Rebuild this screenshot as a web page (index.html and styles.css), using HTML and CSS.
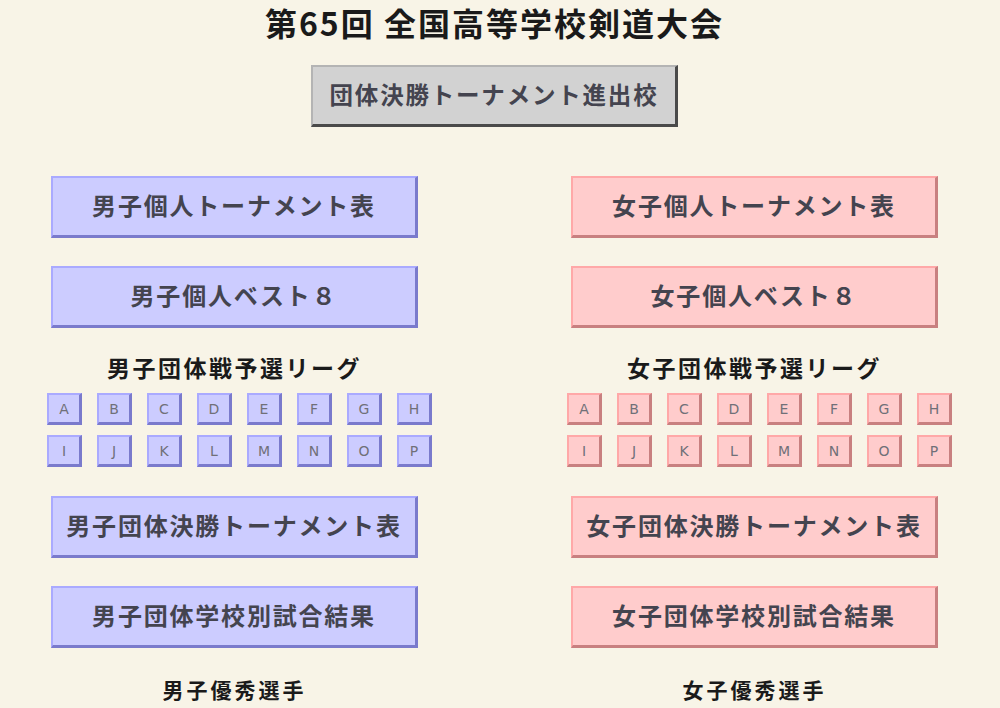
FILE: index.html
```html
<!DOCTYPE html>
<html lang="ja">
<head>
<meta charset="utf-8">
<title>第65回 全国高等学校剣道大会</title>
<link rel="stylesheet" href="styles.css">
</head>
<body>
<div class="page">
  <h1 class="title">第65回 全国高等学校剣道大会</h1>
  <a class="btn btn-gray">団体決勝トーナメント進出校</a>

  <div class="cols">
    <section class="col men">
      <a class="btn">男子個人トーナメント表</a>
      <a class="btn">男子個人ベスト８</a>
      <h2 class="heading">男子団体戦予選リーグ</h2>
      <div class="leagues">
        <a class="box">A</a><a class="box">B</a><a class="box">C</a><a class="box">D</a>
        <a class="box">E</a><a class="box">F</a><a class="box">G</a><a class="box">H</a>
        <a class="box">I</a><a class="box">J</a><a class="box">K</a><a class="box">L</a>
        <a class="box">M</a><a class="box">N</a><a class="box">O</a><a class="box">P</a>
      </div>
      <a class="btn btn-after">男子団体決勝トーナメント表</a>
      <a class="btn">男子団体学校別試合結果</a>
      <h3 class="sub">男子優秀選手</h3>
    </section>

    <section class="col women">
      <a class="btn">女子個人トーナメント表</a>
      <a class="btn">女子個人ベスト８</a>
      <h2 class="heading">女子団体戦予選リーグ</h2>
      <div class="leagues">
        <a class="box">A</a><a class="box">B</a><a class="box">C</a><a class="box">D</a>
        <a class="box">E</a><a class="box">F</a><a class="box">G</a><a class="box">H</a>
        <a class="box">I</a><a class="box">J</a><a class="box">K</a><a class="box">L</a>
        <a class="box">M</a><a class="box">N</a><a class="box">O</a><a class="box">P</a>
      </div>
      <a class="btn btn-after">女子団体決勝トーナメント表</a>
      <a class="btn">女子団体学校別試合結果</a>
      <h3 class="sub">女子優秀選手</h3>
    </section>
  </div>
</div>
</body>
</html>
```

FILE: styles.css
```css
html, body {
  margin: 0;
  padding: 0;
  background: #f8f4e7;
  overflow: hidden;
}

body {
  font-family: "Noto Sans CJK JP", "Noto Sans", sans-serif;
  color: #222;
}

.page {
  width: 989px;
  height: 708px;
  display: flex;
  flex-direction: column;
  align-items: center;
}

.title {
  margin: 4px 0 0;
  font-size: 32px;
  line-height: 36px;
  font-weight: 700;
  letter-spacing: 2px;
  color: #1a1a1a;
}

/* raised link buttons */
.btn {
  box-sizing: border-box;
  width: 367px;
  height: 62px;
  padding-bottom: 4px;
  display: flex;
  align-items: center;
  justify-content: center;
  font-size: 24px;
  font-weight: 700;
  letter-spacing: 1.8px;
  color: #44444f;
  border-style: solid;
  border-width: 2px 3px 3px 2px;
  cursor: pointer;
}

.btn-gray {
  margin-top: 25px;
  background: #d2d2d2;
  border-color: #b4b4b4 #4a4a4a #4a4a4a #b4b4b4;
  font-size: 23.5px;
}

.cols {
  margin-top: 49px;
  display: grid;
  grid-template-columns: 367px 367px;
  column-gap: 153px;
}

.col {
  display: flex;
  flex-direction: column;
  align-items: center;
}

.col .btn + .btn {
  margin-top: 28px;
}

.men .btn {
  background: #ccccff;
  border-color: #aaaaff #7a7acc #7a7acc #aaaaff;
}

.women .btn {
  background: #ffcccc;
  border-color: #ffa8a8 #c88080 #c88080 #ffa8a8;
}

.heading {
  margin: 24px 0 0;
  font-size: 23px;
  line-height: 30px;
  font-weight: 700;
  letter-spacing: 2.5px;
  color: #1a1a1a;
}

/* league buttons A–P, two rows of eight */
.leagues {
  margin: 11px 0 0;
  width: 385px;
  transform: translateX(5px);
  display: grid;
  grid-template-columns: repeat(8, 35px);
  grid-auto-rows: 32px;
  column-gap: 15px;
  row-gap: 10px;
}

.box {
  box-sizing: border-box;
  display: flex;
  align-items: center;
  justify-content: center;
  font-family: "DejaVu Sans", "Liberation Sans", sans-serif;
  font-size: 14px;
  color: #707078;
  border-style: solid;
  border-width: 2px 3px 3px 2px;
  cursor: pointer;
}

.men .box {
  background: #ccccff;
  border-color: #aaaaff #7a7acc #7a7acc #aaaaff;
}

.women .box {
  background: #ffcccc;
  border-color: #ffa8a8 #c88080 #c88080 #ffa8a8;
}

.col .btn-after {
  margin-top: 29px;
}

.sub {
  margin: 26px 0 0;
  font-size: 21px;
  line-height: 30px;
  font-weight: 700;
  letter-spacing: 3px;
  color: #1a1a1a;
}
```
